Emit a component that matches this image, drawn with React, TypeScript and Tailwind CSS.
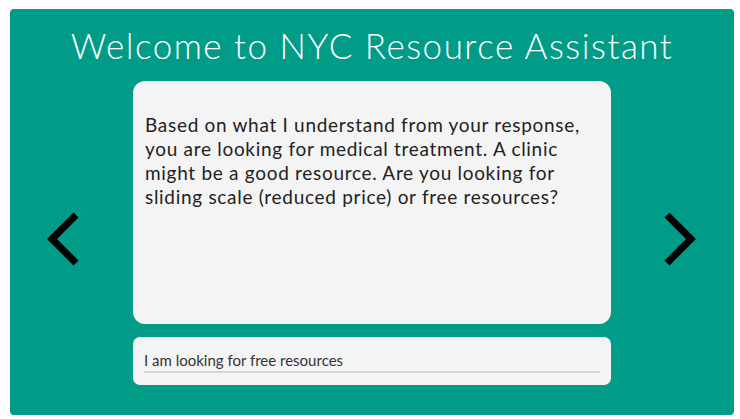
import React from "react";

const Chevron = ({ dir }: { dir: "left" | "right" }) => (
  <svg width="36" height="56" viewBox="0 0 36 56" fill="none">
    <polyline
      points={dir === "left" ? "30,4 6,28 30,52" : "6,4 30,28 6,52"}
      stroke="#000"
      strokeWidth="7"
      strokeLinecap="butt"
      strokeLinejoin="miter"
    />
  </svg>
);

const App = () => {
  return (
    <div className="w-[740px] h-[419px] bg-white pt-[9px] pl-[10px] font-['Lato',sans-serif]">
      <div className="w-[724px] h-[406px] bg-[#009c88] rounded-[4px] flex flex-col">
        {/* Title */}
        <h1 className="pt-[14px] h-[72px] text-center text-white text-[35px] leading-[44px] font-light tracking-[1.5px]">
          Welcome to NYC Resource Assistant
        </h1>

        {/* Chat row */}
        <div className="flex">
          <div className="w-[123px] pl-[36px] pt-[130px]">
            <Chevron dir="left" />
          </div>

          <div className="w-[478px] flex flex-col gap-[13px]">
            {/* Assistant message */}
            <div className="h-[243px] bg-[#f4f4f4] rounded-[12px] px-[12px] pt-[32px] text-[#222] text-[19px] leading-[24px] tracking-[0.7px]">
              Based on what I understand from your response, you are looking
              for medical treatment. A clinic might be a good resource. Are you
              looking for sliding scale (reduced price) or free resources?
            </div>

            {/* Reply input */}
            <div className="h-[48px] bg-[#f4f4f4] rounded-[7px] px-[11px] pt-[14px]">
              <div className="h-[22px] border-b-2 border-[#d8d8d8] text-[15px] leading-[18px] text-[#333]">
                I am looking for free resources
              </div>
            </div>
          </div>

          <div className="w-[123px] pl-[50px] pt-[130px]">
            <Chevron dir="right" />
          </div>
        </div>
      </div>
    </div>
  );
};

export default App;
